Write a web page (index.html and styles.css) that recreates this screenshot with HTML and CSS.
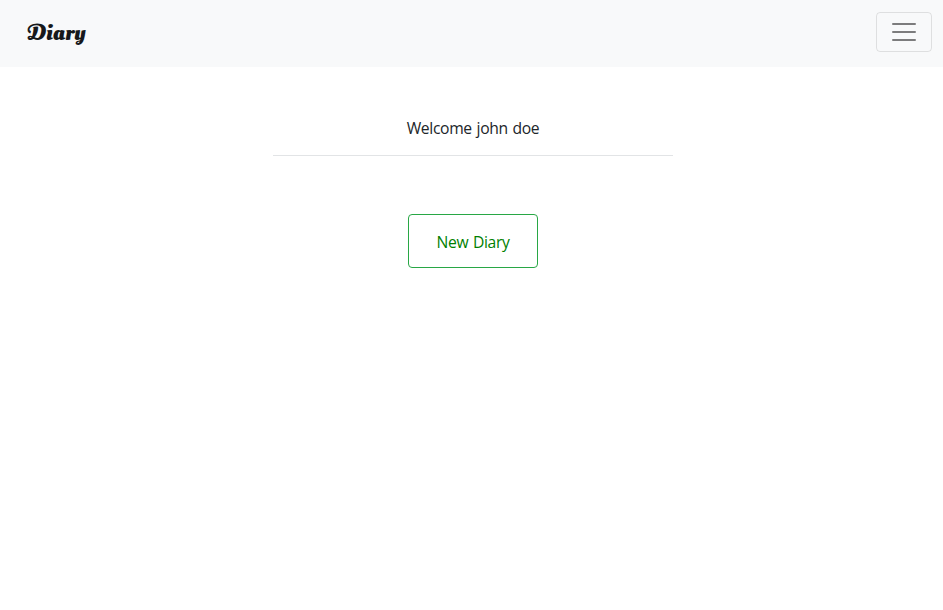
FILE: index.html
```html
<!DOCTYPE html>
<html lang="en">
<head>
<meta charset="utf-8">
<title>Diary</title>
<link rel="stylesheet" href="styles.css">
</head>
<body>
<nav class="navbar">
  <a class="brand">Diary</a>
  <button class="toggler" type="button" aria-label="Toggle navigation">
    <svg class="toggler-icon" viewBox="0 0 30 30"><path d="M4 7h22M4 15h22M4 23h22"/></svg>
  </button>
</nav>
<main class="content">
  <p class="welcome">Welcome john doe</p>
  <button class="new-diary" type="button">New Diary</button>
</main>
</body>
</html>
```
FILE: styles.css
```css
* { box-sizing: border-box; }
body {
  margin: 0;
  background: #fff;
  color: #212529;
  font: 15.7px/24px "Open Sans", "Noto Sans", sans-serif;
  letter-spacing: -0.35px;
  word-spacing: 1px;
}
.navbar {
  display: flex;
  align-items: flex-start;
  justify-content: space-between;
  height: 67px;
  padding: 12px 11px 0 27px;
  background: #f8f9fa;
}
.brand {
  margin-top: 6px;
  color: #16181b;
  font: 700 23px/30px "Oleo Script Swash Caps", "Oleo Script", "Lobster", "Roboto", sans-serif;
  letter-spacing: 0;
}
.toggler {
  display: flex;
  justify-content: center;
  width: 56px;
  height: 40px;
  padding: 4px 0 0;
  border: 1px solid rgba(0, 0, 0, .1);
  border-radius: 4px;
  background: transparent;
}
.toggler-icon {
  width: 30px;
  height: 30px;
  fill: none;
  stroke: rgba(0, 0, 0, .5);
  stroke-width: 2;
  stroke-linecap: round;
}
.content {
  display: flex;
  flex-direction: column;
  align-items: center;
  padding: 49px 0 0 3px;
}
.welcome {
  width: 400px;
  height: 40px;
  margin: 0 0 58px;
  border-bottom: 1px solid #e2e4e6;
  text-align: center;
}
.new-diary {
  width: 130px;
  height: 54px;
  padding: 2px 0 0;
  border: 1px solid #28a745;
  border-radius: 4px;
  background: #fff;
  color: #008000;
  font: inherit;
  letter-spacing: inherit;
  word-spacing: inherit;
}
```
